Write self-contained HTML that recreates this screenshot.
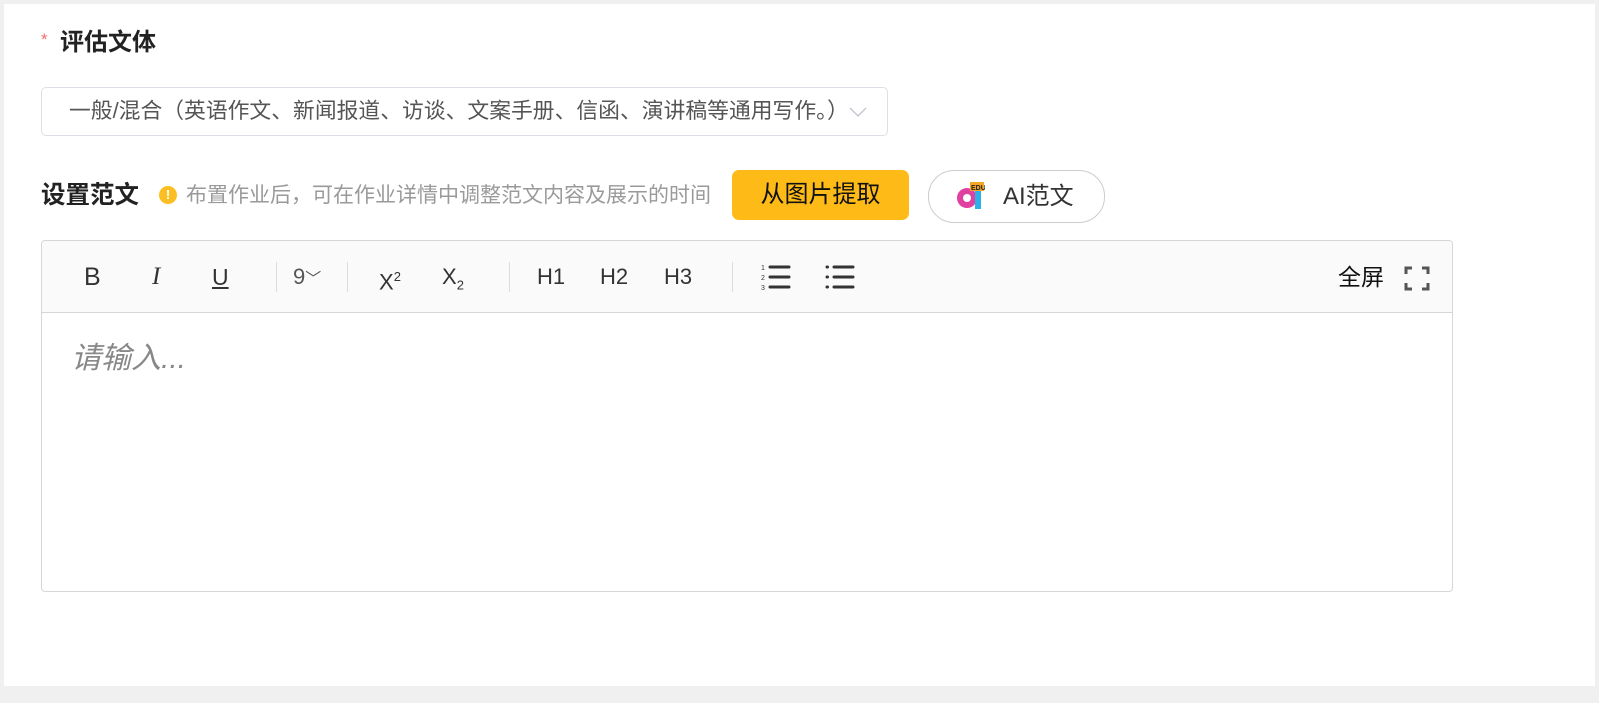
<!DOCTYPE html>
<html><head><meta charset="utf-8"><style>
body{margin:0;width:1599px;height:703px;background:#f0f0f0;font-family:"Liberation Sans","Noto Sans CJK SC",sans-serif;position:relative;overflow:hidden}
.card{position:absolute;left:4px;top:4px;width:1591px;height:682px;background:#fff}
.a{position:absolute;white-space:nowrap}
.tb{position:absolute;top:0;height:72px;line-height:72px;color:#333;font-size:22px}
.sep{position:absolute;top:21px;width:1px;height:30px;background:#ddd}
</style></head><body>
<div class="card"></div>
<div class="a" style="left:41px;top:30px;font-size:17px;color:#f56c6c">*</div>
<div class="a" style="left:60px;top:27px;font-size:24px;font-weight:bold;color:#222;line-height:32px">评估文体</div>
<div class="a" style="left:41px;top:87px;width:845px;height:47px;border:1px solid #dcdfe6;border-radius:5px"></div>
<div class="a" style="left:69px;top:96px;font-size:21.8px;line-height:30px;color:#555">一般/混合（英语作文、新闻报道、访谈、文案手册、信函、演讲稿等通用写作。）</div>
<svg class="a" style="left:849px;top:106px" width="18" height="12"><path d="M1 2L9 10L17 2" fill="none" stroke="#c0c4cc" stroke-width="1.3"/></svg>
<div class="a" style="left:41px;top:180px;font-size:24.5px;line-height:32px;font-weight:bold;color:#222">设置范文</div>
<div class="a" style="left:159px;top:186px;width:18px;height:18px;border-radius:50%;background:#fbbf24;color:#fff;font-size:13px;font-weight:bold;text-align:center;line-height:18px">!</div>
<div class="a" style="left:186px;top:182px;font-size:21px;line-height:28px;color:#9a9a9a">布置作业后，可在作业详情中调整范文内容及展示的时间</div>
<div class="a" style="left:732px;top:170px;width:177px;height:50px;background:#febb18;border-radius:7px;text-align:center;line-height:50px;font-size:24px;color:#111">从图片提取</div>
<div class="a" style="left:928px;top:170px;width:175px;height:51px;border:1px solid #ccc;border-radius:26px"></div>
<svg class="a" style="left:955px;top:181px" width="30" height="30"><circle cx="12" cy="17" r="10" fill="#e040a0"/><circle cx="12" cy="17" r="4" fill="#fff"/><rect x="20" y="10" width="6" height="18" fill="#2bb0e8"/><rect x="15" y="1" width="14" height="9" fill="#f5a623"/><text x="16" y="9" font-size="7" font-family="Liberation Sans" font-weight="bold" fill="#222">EDU</text></svg>
<div class="a" style="left:1003px;top:181px;font-size:24px;line-height:32px;color:#333">AI范文</div>
<div class="a" style="left:41px;top:240px;width:1410px;height:350px;border:1px solid #d6d6d6;border-radius:4px;overflow:hidden;background:#fff">
 <div style="position:absolute;left:0;top:0;width:100%;height:71px;background:#fafafa;border-bottom:1px solid #d6d6d6"></div>
 <div class="tb" style="left:42px;font-size:25px">B</div>
 <div class="tb" style="left:110px;font-style:italic;font-family:'Liberation Serif';font-size:25px">I</div>
 <div class="tb" style="left:170px;text-decoration:underline;font-size:23px">U</div>
 <div class="sep" style="left:234px"></div>
 <div class="tb" style="left:251px;color:#555">9<span style="font-size:16px">﹀</span></div>
 <div class="sep" style="left:305px"></div>
 <div class="tb" style="left:337px">X<sup style="font-size:13px">2</sup></div>
 <div class="tb" style="left:400px">X<sub style="font-size:13px">2</sub></div>
 <div class="sep" style="left:467px"></div>
 <div class="tb" style="left:495px">H1</div>
 <div class="tb" style="left:558px">H2</div>
 <div class="tb" style="left:622px">H3</div>
 <div class="sep" style="left:690px"></div>
 <svg style="position:absolute;left:719px;top:22px" width="32" height="30"><text x="0" y="7" font-size="7" fill="#333">1</text><text x="0" y="17" font-size="7" fill="#333">2</text><text x="0" y="27" font-size="7" fill="#333">3</text><g stroke="#333" stroke-width="3" stroke-linecap="round"><path d="M9 4H28M9 14H28M9 24H28"/></g></svg>
 <svg style="position:absolute;left:783px;top:22px" width="32" height="30"><g stroke="#333" stroke-width="3" stroke-linecap="round"><path d="M2 4H2.5M2 14H2.5M2 24H2.5M9 4H28M9 14H28M9 24H28"/></g></svg>
 <div class="tb" style="left:1296px;color:#111;font-size:23px">全屏</div>
 <svg style="position:absolute;left:1362px;top:25px" width="26" height="25"><g fill="none" stroke="#555" stroke-width="3"><path d="M2 8V2H8M18 2H24V8M24 17V23H18M8 23H2V17"/></g></svg>
 <div style="position:absolute;left:29px;top:99px;font-size:30px;line-height:38px;font-style:italic;color:#888">请输入...</div>
</div>
</body></html>
